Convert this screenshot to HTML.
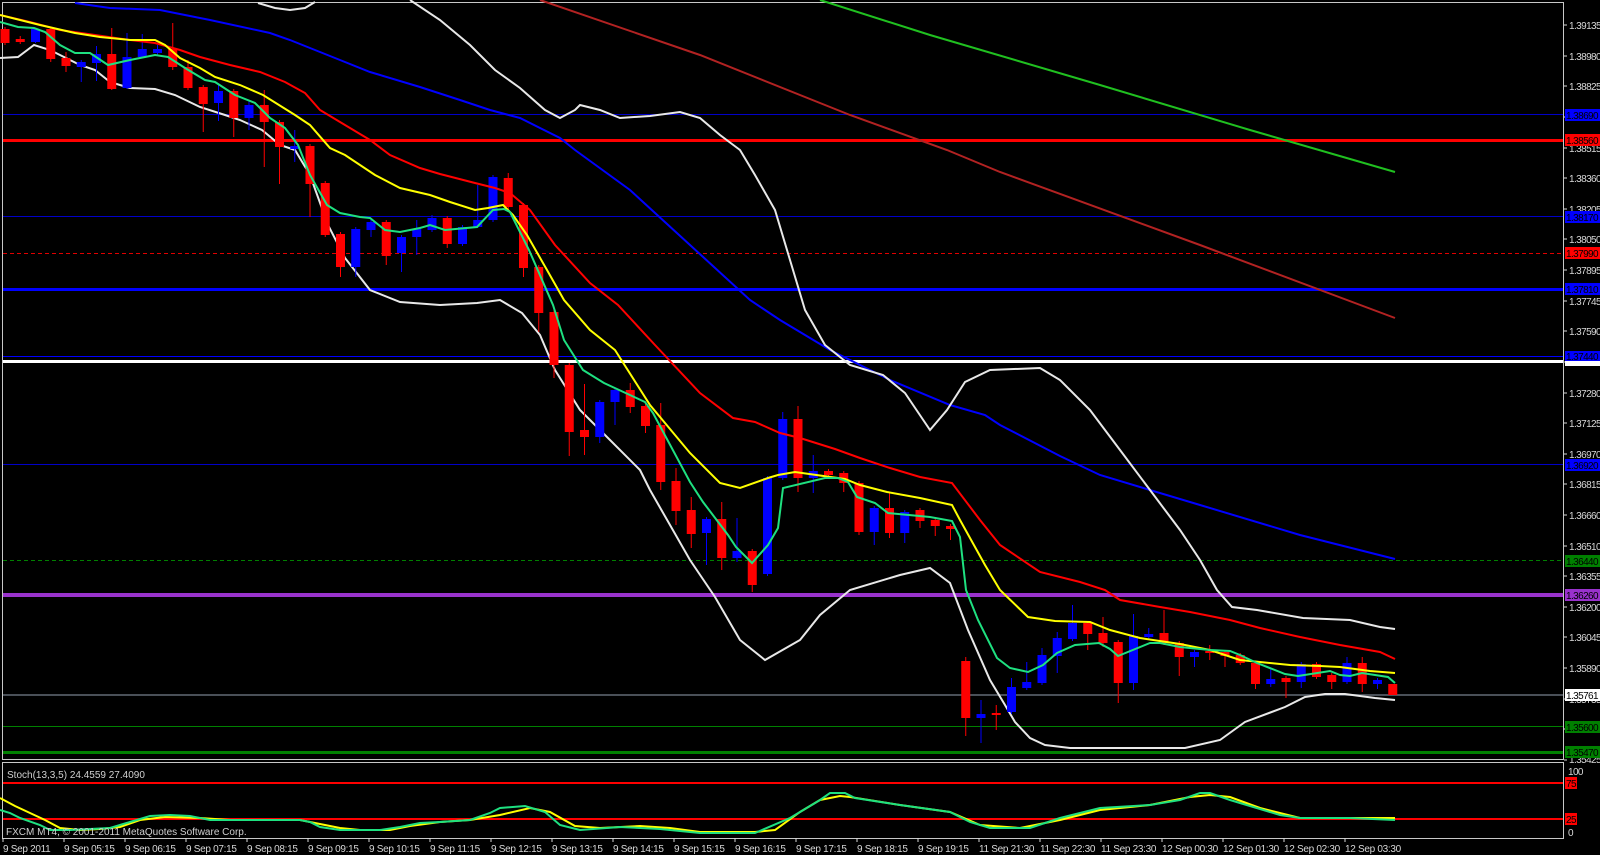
<!DOCTYPE html>
<html><head><meta charset="utf-8"><style>
html,body{margin:0;padding:0;background:#000;width:1600px;height:855px;overflow:hidden}
svg{display:block}
text{font-family:"Liberation Sans",sans-serif;font-size:10px}
.ax text{letter-spacing:-0.6px}
</style></head><body>
<svg width="1600" height="855" viewBox="0 0 1600 855" xmlns="http://www.w3.org/2000/svg">
<rect width="1600" height="855" fill="#000"/>
<g fill="none" stroke="#c8c8c8" stroke-width="1" shape-rendering="crispEdges">
<path d="M2.5 2.5H1563.5V759.5H2.5Z"/>
<path d="M2.5 762.5H1563.5V838.5H2.5Z"/>
</g>
<g shape-rendering="crispEdges">
<rect x="3" y="114" width="1560" height="1" fill="#0000c8"/>
<rect x="3" y="139" width="1560" height="3" fill="#ff0000"/>
<rect x="3" y="216" width="1560" height="1" fill="#0000c8"/>
<line x1="3" y1="253.5" x2="1563" y2="253.5" stroke="#e00000" stroke-dasharray="4,3"/>
<rect x="3" y="288" width="1560" height="3" fill="#0000ff"/>
<rect x="3" y="356" width="1560" height="1" fill="#0000ff"/>
<rect x="3" y="360" width="1560" height="3" fill="#ffffff"/>
<rect x="3" y="464" width="1560" height="1" fill="#0000c8"/>
<line x1="3" y1="560.5" x2="1563" y2="560.5" stroke="#008000" stroke-dasharray="4,3"/>
<rect x="3" y="593" width="1560" height="4" fill="#9932cc"/>
<rect x="3" y="694" width="1560" height="2" fill="#4a5058"/>
<rect x="3" y="726" width="1560" height="1" fill="#008000"/>
<rect x="3" y="751" width="1560" height="3" fill="#008000"/>
<rect x="3" y="782" width="1560" height="2" fill="#ff0000"/>
<rect x="3" y="818" width="1560" height="2" fill="#ff0000"/>
</g>
<polyline fill="none" stroke="#b22222" stroke-width="2" points="540,0 700,55 850,115 947,150 1000,172 1200,245 1395,318"/>
<polyline fill="none" stroke="#20c020" stroke-width="2" points="820,0 930,35 1100,85 1250,130 1395,172"/>
<polyline fill="none" stroke="#0000ff" stroke-width="2" points="75,3 110,8 160,10 210,20 270,33 290,40 340,60 370,72 420,87 460,100 490,110 520,118 560,138 575,150 630,190 690,245 750,300 780,320 830,350 890,380 950,405 985,415 1000,425 1060,456 1100,475 1200,505 1300,535 1395,559"/>
<g fill="none" stroke="#e8e8e8" stroke-width="2">
<polyline points="258,3 275,8 290,10 305,8 315,2"/>
<polyline points="410,0 440,20 470,45 495,70 520,88 545,110 560,118 575,110 580,105 600,110 620,118 650,116 680,112 700,118 720,135 740,150 755,175 775,210 790,260 805,310 825,345 850,365 883,375 905,393 930,430 947,410 965,382 990,370 1040,368 1060,380 1090,410 1120,450 1150,490 1180,530 1200,560 1217,590 1232,607 1257,610 1303,618 1350,620 1380,627 1395,629"/>
<polyline points="0,58 18,57 34,45 50,50 70,60 80,65 95,70 110,82 130,88 155,89 175,95 200,107 225,115 240,120 262,130 280,145 295,150 310,175 328,225 345,258 370,290 400,302 440,305 477,303 500,300 522,313 540,335 555,370 580,410 600,430 640,470 650,490 690,560 715,597 740,640 765,660 800,640 820,615 850,590 900,575 930,568 950,583 968,630 990,680 1005,705 1015,722 1030,738 1045,745 1070,748 1185,748 1220,740 1245,722 1285,707 1305,697 1325,694 1345,694 1375,698 1395,700"/>
</g>
<g stroke-width="1" fill="none">
<path stroke="#ff0000" d="M5 27V45M20.25 36V44M50.75 28V62M66 52V72M111.75 28V90M172.75 23V70M188 60V90M203.25 85V132M233.75 89V137M264.25 90V167M279.5 120V184M310 144V217M325.25 181V237M340.5 232V277M386.25 220V265M447.25 216V248M508.25 173V209M523.5 203V277M538.75 265V332M554 310V378M569.25 363V456M584.5 384V455M630.25 383V413M645.5 404V433M660.75 403V490M676 468V525M691.25 497V548M721.75 502V570M752.25 549V592M798 406V492M828.5 469V477M843.75 471V492M859 481V535M889.5 493V538M920 508V528M935.25 518V536M950.5 524V540M965.75 657V736M996.25 705V730M1087.75 621V650M1103 617V647M1118.25 640V703M1164 610V645M1179.25 641V676M1209.75 645V660M1225 650V667M1240.25 653V665M1255.5 661V689M1286 676V698M1316.5 662V679M1331.75 673V689M1362.25 657V692M1392.75 684V695"/>
<path stroke="#0000ff" d="M35.5 28V43M81.25 60V82M96.5 46V81M127 33V89M142.25 34V58M157.5 45V55M218.5 85V121M249 100V130M294.75 130V162M355.75 227V277M371 220V237M401.5 235V272M416.75 220V255M432 215V232M462.5 225V246M477.75 185V228M493 175V222M599.75 400V443M615 388V425M706.5 517V565M737 518V562M767.5 476V576M782.75 412V480M813.25 455V493M874.25 506V545M904.75 510V543M981 700V743M1011.5 678V714M1026.75 662V690M1042 648V685M1057.25 632V673M1072.5 605V641M1133.5 614V690M1148.75 628V639M1194.5 650V667M1270.75 668V687M1301.25 662V688M1347 657V684M1377.5 678V689"/>
</g>
<g fill="#ff0000">
<rect x="0.5" y="29" width="9" height="14"/><rect x="15.75" y="39" width="9" height="3"/><rect x="46.25" y="29" width="9" height="30"/><rect x="61.5" y="58" width="9" height="8"/><rect x="107.25" y="54" width="9" height="35"/><rect x="168.25" y="49" width="9" height="18"/><rect x="183.5" y="67" width="9" height="21"/><rect x="198.75" y="87" width="9" height="17"/><rect x="229.25" y="91" width="9" height="27"/><rect x="259.75" y="105" width="9" height="17"/><rect x="275" y="122" width="9" height="25"/><rect x="305.5" y="146" width="9" height="38"/><rect x="320.75" y="183" width="9" height="52"/><rect x="336" y="234" width="9" height="33"/><rect x="381.75" y="222" width="9" height="34"/><rect x="442.75" y="218" width="9" height="26"/><rect x="503.75" y="178" width="9" height="29"/><rect x="519" y="205" width="9" height="63"/><rect x="534.25" y="267" width="9" height="46"/><rect x="549.5" y="312" width="9" height="53"/><rect x="564.75" y="365" width="9" height="67"/><rect x="580" y="430" width="9" height="7"/><rect x="625.75" y="390" width="9" height="17"/><rect x="641" y="406" width="9" height="20"/><rect x="656.25" y="425" width="9" height="57"/><rect x="671.5" y="481" width="9" height="30"/><rect x="686.75" y="510" width="9" height="24"/><rect x="717.25" y="519" width="9" height="39"/><rect x="747.75" y="551" width="9" height="34"/><rect x="793.5" y="419" width="9" height="59"/><rect x="824" y="471" width="9" height="4"/><rect x="839.25" y="473" width="9" height="10"/><rect x="854.5" y="483" width="9" height="49"/><rect x="885" y="508" width="9" height="25"/><rect x="915.5" y="510" width="9" height="11"/><rect x="930.75" y="520" width="9" height="6"/><rect x="946" y="526" width="9" height="3"/><rect x="961.25" y="661" width="9" height="57"/><rect x="991.75" y="713" width="9" height="2"/><rect x="1083.25" y="623" width="9" height="11"/><rect x="1098.5" y="633" width="9" height="10"/><rect x="1113.75" y="642" width="9" height="41"/><rect x="1159.5" y="633" width="9" height="10"/><rect x="1174.75" y="643" width="9" height="14"/><rect x="1205.25" y="651" width="9" height="2"/><rect x="1220.5" y="652" width="9" height="4"/><rect x="1235.75" y="655" width="9" height="8"/><rect x="1251" y="663" width="9" height="21"/><rect x="1281.5" y="678" width="9" height="4"/><rect x="1312" y="664" width="9" height="13"/><rect x="1327.25" y="675" width="9" height="7"/><rect x="1357.75" y="663" width="9" height="21"/><rect x="1388.25" y="684" width="9" height="11"/>
</g>
<g fill="#0000ff">
<rect x="31" y="29" width="9" height="13"/><rect x="76.75" y="62" width="9" height="5"/><rect x="92" y="54" width="9" height="9"/><rect x="122.5" y="57" width="9" height="31"/><rect x="137.75" y="49" width="9" height="8"/><rect x="153" y="49" width="9" height="4"/><rect x="214" y="91" width="9" height="12"/><rect x="244.5" y="105" width="9" height="13"/><rect x="290.25" y="146" width="9" height="3"/><rect x="351.25" y="229" width="9" height="38"/><rect x="366.5" y="222" width="9" height="8"/><rect x="397" y="237" width="9" height="16"/><rect x="412.25" y="229" width="9" height="8"/><rect x="427.5" y="218" width="9" height="12"/><rect x="458" y="227" width="9" height="17"/><rect x="473.25" y="220" width="9" height="7"/><rect x="488.5" y="177" width="9" height="43"/><rect x="595.25" y="402" width="9" height="35"/><rect x="610.5" y="390" width="9" height="12"/><rect x="702" y="519" width="9" height="14"/><rect x="732.5" y="551" width="9" height="7"/><rect x="763" y="478" width="9" height="96"/><rect x="778.25" y="419" width="9" height="59"/><rect x="808.75" y="471" width="9" height="7"/><rect x="869.75" y="508" width="9" height="24"/><rect x="900.25" y="512" width="9" height="21"/><rect x="976.5" y="714" width="9" height="4"/><rect x="1007" y="687" width="9" height="25"/><rect x="1022.25" y="682" width="9" height="6"/><rect x="1037.5" y="655" width="9" height="28"/><rect x="1052.75" y="638" width="9" height="18"/><rect x="1068" y="623" width="9" height="16"/><rect x="1129" y="636" width="9" height="47"/><rect x="1144.25" y="634" width="9" height="3"/><rect x="1190" y="652" width="9" height="5"/><rect x="1266.25" y="679" width="9" height="5"/><rect x="1296.75" y="664" width="9" height="18"/><rect x="1342.5" y="663" width="9" height="19"/><rect x="1373" y="680" width="9" height="4"/>
</g>
<polyline fill="none" stroke="#ff0000" stroke-width="2" points="0,15 30,22 60,30 95,35 130,40 155,43 180,50 200,57 230,65 260,72 285,82 305,93 320,110 345,125 370,140 390,155 420,168 440,174 475,183 495,188 510,193 530,210 555,245 590,283 618,305 655,345 700,393 733,418 755,422 780,433 800,438 835,449 860,458 890,468 920,477 952,483 980,520 1000,545 1040,572 1080,582 1105,590 1120,600 1160,607 1190,612 1230,620 1260,628 1300,637 1340,645 1380,652 1395,659"/>
<polyline fill="none" stroke="#ffff00" stroke-width="2" points="0,15 40,25 75,33 100,37 130,40 155,40 165,45 180,58 200,68 215,77 240,85 263,95 295,115 310,125 330,148 345,155 375,175 400,188 430,195 450,202 475,210 488,208 503,205 513,215 527,235 547,270 564,300 590,330 615,350 650,405 690,453 720,483 740,488 768,478 778,475 795,472 845,479 860,485 887,492 920,498 952,505 960,520 985,565 1000,590 1028,617 1055,621 1090,622 1110,630 1140,638 1180,644 1210,650 1240,660 1290,665 1320,666 1340,667 1370,671 1395,673"/>
<polyline fill="none" stroke="#1ee080" stroke-width="2" points="0,22 18,27 34,28 45,32 60,45 75,53 90,53 108,65 130,60 155,55 168,57 185,68 205,80 215,82 235,95 255,103 270,118 285,128 298,145 310,175 327,205 340,213 360,217 370,218 385,230 400,232 420,228 430,225 445,230 477,227 493,210 504,209 510,212 529,250 553,305 564,340 583,370 604,383 645,402 653,413 690,482 703,502 728,535 736,547 752,563 768,545 778,528 783,488 825,478 838,478 848,482 857,497 875,503 888,513 930,517 952,521 960,537 966,590 978,620 997,658 1010,668 1028,672 1043,665 1057,653 1075,645 1099,643 1110,649 1118,656 1150,643 1160,643 1180,647 1210,650 1230,651 1240,655 1257,663 1285,674 1298,676 1330,671 1340,675 1350,676 1362,673 1375,675 1388,677 1395,683"/>
<polyline fill="none" stroke="#ffff00" stroke-width="2" points="0,798 15,806 30,813 45,820 60,828 80,830 100,829 120,827 140,820 165,817 200,818 230,820 300,820 320,824 340,828 360,830 390,830 410,826 440,822 470,820 500,815 530,808 550,812 575,826 600,828 640,826 670,828 700,832 755,832 775,830 800,812 820,800 840,796 850,797 900,805 950,812 980,825 1020,828 1060,820 1100,810 1150,805 1190,797 1210,795 1230,797 1260,808 1300,818 1395,818"/>
<polyline fill="none" stroke="#1ee080" stroke-width="2" points="0,810 10,813 20,818 40,825 50,830 70,830 90,829 110,828 130,822 150,816 170,815 190,816 210,820 300,820 310,822 320,827 340,830 380,830 400,827 420,823 440,822 470,820 490,813 500,808 525,806 545,812 560,825 580,830 620,827 660,829 700,833 755,833 790,818 820,800 830,793 845,793 855,798 900,805 950,812 970,822 990,828 1030,828 1060,818 1100,808 1150,805 1180,800 1200,793 1210,793 1230,800 1280,815 1300,818 1350,818 1395,820"/>
<text x="7" y="778" fill="#d0d0d0">Stoch(13,3,5) 24.4559 27.4090</text>
<text x="6" y="835" fill="#d0d0d0">FXCM MT4, © 2001-2011 MetaQuotes Software Corp.</text>
<g class="ax" fill="#d8d8d8">
<path d="M1564 25h3M1564 56h3M1564 86h3M1564 117h3M1564 148h3M1564 178h3M1564 209h3M1564 239h3M1564 270h3M1564 301h3M1564 331h3M1564 362h3M1564 393h3M1564 423h3M1564 454h3M1564 484h3M1564 515h3M1564 546h3M1564 576h3M1564 607h3M1564 637h3M1564 668h3M1564 699h3M1564 729h3M1564 760h3" stroke="#d8d8d8"/>
<text x="1569" y="29">1.39135</text><text x="1569" y="60">1.38980</text><text x="1569" y="90">1.38825</text><text x="1569" y="121">1.38670</text><text x="1569" y="152">1.38515</text><text x="1569" y="182">1.38360</text><text x="1569" y="213">1.38205</text><text x="1569" y="243">1.38050</text><text x="1569" y="274">1.37895</text><text x="1569" y="305">1.37745</text><text x="1569" y="335">1.37590</text><text x="1569" y="366">1.37435</text><text x="1569" y="397">1.37280</text><text x="1569" y="427">1.37125</text><text x="1569" y="458">1.36970</text><text x="1569" y="488">1.36815</text><text x="1569" y="519">1.36660</text><text x="1569" y="550">1.36510</text><text x="1569" y="580">1.36355</text><text x="1569" y="611">1.36200</text><text x="1569" y="641">1.36045</text><text x="1569" y="672">1.35890</text><text x="1569" y="703">1.35735</text><text x="1569" y="733">1.35580</text><text x="1569" y="763">1.35425</text>
<text x="1568" y="775">100</text><text x="1568" y="836">0</text>
</g>
<g class="ax">
<rect x="1565" y="109" width="35" height="12" fill="#0000ff"/><text x="1566" y="119" fill="#000">1.38690</text>
<rect x="1565" y="134" width="35" height="12" fill="#ff0000"/><text x="1566" y="144" fill="#000">1.38560</text>
<rect x="1565" y="211" width="35" height="12" fill="#0000ff"/><text x="1566" y="221" fill="#000">1.38170</text>
<rect x="1565" y="247" width="35" height="12" fill="#ff0000"/><text x="1566" y="257" fill="#000">1.37990</text>
<rect x="1565" y="283" width="35" height="12" fill="#0000ff"/><text x="1566" y="293" fill="#000">1.37810</text>
<rect x="1565" y="351" width="35" height="10" fill="#0000ff"/><text x="1566" y="360" fill="#000">1.37440</text>
<rect x="1565" y="361" width="35" height="5" fill="#ffffff"/>
<rect x="1565" y="459" width="35" height="12" fill="#0000ff"/><text x="1566" y="469" fill="#000">1.36920</text>
<rect x="1565" y="555" width="35" height="12" fill="#008000"/><text x="1566" y="565" fill="#000">1.36440</text>
<rect x="1565" y="589" width="35" height="12" fill="#9932cc"/><text x="1566" y="599" fill="#000">1.36260</text>
<rect x="1565" y="689" width="35" height="12" fill="#ffffff"/><text x="1566" y="699" fill="#000">1.35761</text>
<rect x="1565" y="721" width="35" height="12" fill="#008000"/><text x="1566" y="731" fill="#000">1.35600</text>
<rect x="1565" y="746" width="35" height="12" fill="#008000"/><text x="1566" y="756" fill="#000">1.35470</text>
<rect x="1565" y="777" width="12" height="12" fill="#ff0000"/><text x="1566" y="787" fill="#000">75</text>
<rect x="1565" y="813" width="12" height="12" fill="#ff0000"/><text x="1566" y="823" fill="#000">25</text>
</g>
<path stroke="#d8d8d8" d="M3 838v4M64 838v4M125 838v4M186 838v4M247 838v4M308 838v4M369 838v4M430 838v4M491 838v4M552 838v4M613 838v4M674 838v4M735 838v4M796 838v4M857 838v4M918 838v4M979 838v4M1040 838v4M1101 838v4M1162 838v4M1223 838v4M1284 838v4M1345 838v4"/>
<g fill="#d8d8d8" letter-spacing="-0.3">
<text x="3" y="852">9 Sep 2011</text><text x="64" y="852">9 Sep 05:15</text><text x="125" y="852">9 Sep 06:15</text><text x="186" y="852">9 Sep 07:15</text><text x="247" y="852">9 Sep 08:15</text><text x="308" y="852">9 Sep 09:15</text><text x="369" y="852">9 Sep 10:15</text><text x="430" y="852">9 Sep 11:15</text><text x="491" y="852">9 Sep 12:15</text><text x="552" y="852">9 Sep 13:15</text><text x="613" y="852">9 Sep 14:15</text><text x="674" y="852">9 Sep 15:15</text><text x="735" y="852">9 Sep 16:15</text><text x="796" y="852">9 Sep 17:15</text><text x="857" y="852">9 Sep 18:15</text><text x="918" y="852">9 Sep 19:15</text><text x="979" y="852">11 Sep 21:30</text><text x="1040" y="852">11 Sep 22:30</text><text x="1101" y="852">11 Sep 23:30</text><text x="1162" y="852">12 Sep 00:30</text><text x="1223" y="852">12 Sep 01:30</text><text x="1284" y="852">12 Sep 02:30</text><text x="1345" y="852">12 Sep 03:30</text>
</g>
</svg>
</body></html>
